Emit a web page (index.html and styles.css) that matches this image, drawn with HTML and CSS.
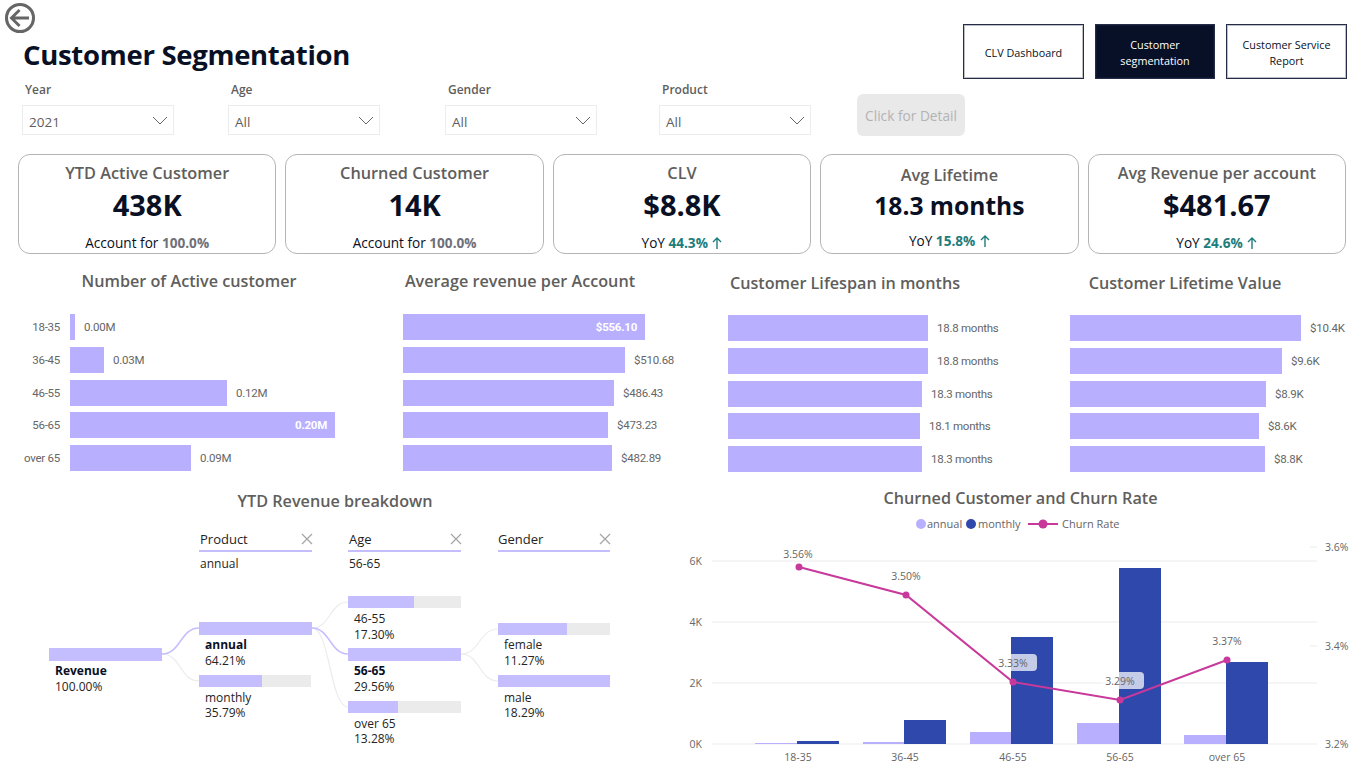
FILE: index.html
```html
<!DOCTYPE html>
<html lang="en">
<head>
    <meta charset="UTF-8">
    <meta name="viewport" content="width=device-width, initial-scale=1.0">
    <title>Customer Segmentation</title>
    <link rel="stylesheet" href="styles.css">
</head>
<body>
    <div class="page">
        <header class="top">
            <div class="top-left">
                <svg class="back" viewBox="0 0 40 40" width="40" height="40">
                    <circle cx="20" cy="20" r="15" fill="none" stroke="#666" stroke-width="3.4"/>
                    <path d="M30 20H10.5M19.5 11L10.5 20L19.5 29" fill="none" stroke="#666" stroke-width="3.2"/>
                </svg>
                <h1>Customer Segmentation</h1>
                <div class="filters">
                    <div class="slicer">
                        <div class="slicer-label">Year</div>
                        <div class="dropdown">2021<svg viewBox="0 0 16 9" width="16" height="9"><path d="M1 1L8 8L15 1" fill="none" stroke="#666"/></svg></div>
                    </div>
                    <div class="slicer">
                        <div class="slicer-label">Age</div>
                        <div class="dropdown">All<svg viewBox="0 0 16 9" width="16" height="9"><path d="M1 1L8 8L15 1" fill="none" stroke="#666"/></svg></div>
                    </div>
                    <div class="slicer">
                        <div class="slicer-label">Gender</div>
                        <div class="dropdown">All<svg viewBox="0 0 16 9" width="16" height="9"><path d="M1 1L8 8L15 1" fill="none" stroke="#666"/></svg></div>
                    </div>
                    <div class="slicer">
                        <div class="slicer-label">Product</div>
                        <div class="dropdown">All<svg viewBox="0 0 16 9" width="16" height="9"><path d="M1 1L8 8L15 1" fill="none" stroke="#666"/></svg></div>
                    </div>
                    <div class="detail-btn">Click for Detail</div>
                </div>
            </div>
            <nav class="nav">
                <a class="nav-btn">CLV Dashboard</a>
                <a class="nav-btn active">Customer segmentation</a>
                <a class="nav-btn">Customer Service Report</a>
            </nav>
        </header>

        <section class="kpis">
            <div class="kpi">
                <div class="kpi-title">YTD Active Customer</div>
                <div class="kpi-value">438K</div>
                <div class="kpi-foot">Account for <b>100.0%</b></div>
            </div>
            <div class="kpi">
                <div class="kpi-title">Churned Customer</div>
                <div class="kpi-value">14K</div>
                <div class="kpi-foot">Account for <b>100.0%</b></div>
            </div>
            <div class="kpi">
                <div class="kpi-title">CLV</div>
                <div class="kpi-value">$8.8K</div>
                <div class="kpi-foot">YoY <b class="up">44.3%</b> <svg class="arrow" viewBox="0 0 10 12" width="10" height="12"><path d="M5 12V1M1 5L5 1L9 5"/></svg></div>
            </div>
            <div class="kpi kpi-alt">
                <div class="kpi-title">Avg Lifetime</div>
                <div class="kpi-value">18.3 months</div>
                <div class="kpi-foot">YoY <b class="up">15.8%</b> <svg class="arrow" viewBox="0 0 10 12" width="10" height="12"><path d="M5 12V1M1 5L5 1L9 5"/></svg></div>
            </div>
            <div class="kpi">
                <div class="kpi-title">Avg Revenue per account</div>
                <div class="kpi-value">$481.67</div>
                <div class="kpi-foot">YoY <b class="up">24.6%</b> <svg class="arrow" viewBox="0 0 10 12" width="10" height="12"><path d="M5 12V1M1 5L5 1L9 5"/></svg></div>
            </div>
        </section>

        <section class="charts">
            <div class="bar-chart active-chart">
                <h2>Number of Active customer</h2>
                <div class="row"><span class="cat">18-35</span><div class="bar" style="width:5px"></div><span class="val">0.00M</span></div>
                <div class="row"><span class="cat">36-45</span><div class="bar" style="width:34px"></div><span class="val">0.03M</span></div>
                <div class="row"><span class="cat">46-55</span><div class="bar" style="width:157px"></div><span class="val">0.12M</span></div>
                <div class="row"><span class="cat">56-65</span><div class="bar" style="width:265px"><span class="val-in">0.20M</span></div></div>
                <div class="row"><span class="cat">over 65</span><div class="bar" style="width:121px"></div><span class="val">0.09M</span></div>
            </div>
            <div class="bar-chart revenue-chart">
                <h2>Average revenue per Account</h2>
                <div class="row"><div class="bar" style="width:242px"><span class="val-in">$556.10</span></div></div>
                <div class="row"><div class="bar" style="width:222px"></div><span class="val">$510.68</span></div>
                <div class="row"><div class="bar" style="width:211px"></div><span class="val">$486.43</span></div>
                <div class="row"><div class="bar" style="width:205px"></div><span class="val">$473.23</span></div>
                <div class="row"><div class="bar" style="width:209px"></div><span class="val">$482.89</span></div>
            </div>
            <div class="bar-chart lifespan-chart">
                <h2>Customer Lifespan in months</h2>
                <div class="row"><div class="bar" style="width:200px"></div><span class="val">18.8 months</span></div>
                <div class="row"><div class="bar" style="width:200px"></div><span class="val">18.8 months</span></div>
                <div class="row"><div class="bar" style="width:194px"></div><span class="val">18.3 months</span></div>
                <div class="row"><div class="bar" style="width:192px"></div><span class="val">18.1 months</span></div>
                <div class="row"><div class="bar" style="width:194px"></div><span class="val">18.3 months</span></div>
            </div>
            <div class="bar-chart value-chart">
                <h2>Customer Lifetime Value</h2>
                <div class="row"><div class="bar" style="width:231px"></div><span class="val">$10.4K</span></div>
                <div class="row"><div class="bar" style="width:212px"></div><span class="val">$9.6K</span></div>
                <div class="row"><div class="bar" style="width:196px"></div><span class="val">$8.9K</span></div>
                <div class="row"><div class="bar" style="width:189px"></div><span class="val">$8.6K</span></div>
                <div class="row"><div class="bar" style="width:195px"></div><span class="val">$8.8K</span></div>
            </div>
        </section>

        <section class="bottom">
            <div class="panel tree-panel">
                <h2>YTD Revenue breakdown</h2>
                <svg class="tree" viewBox="0 513 670 258" width="670" height="258">
                    <text class="tree-head" x="200" y="544">Product</text>
                    <path class="tree-x" d="M302 534L312 544M312 534L302 544"/>
                    <rect class="tree-line" x="199" y="550" width="113" height="2"/>
                    <text class="tree-text" x="200" y="568">annual</text>

                    <text class="tree-head" x="349" y="544">Age</text>
                    <path class="tree-x" d="M451 534L461 544M461 534L451 544"/>
                    <rect class="tree-line" x="348" y="550" width="113" height="2"/>
                    <text class="tree-text" x="349" y="568">56-65</text>

                    <text class="tree-head" x="498" y="544">Gender</text>
                    <path class="tree-x" d="M600 534L610 544M610 534L600 544"/>
                    <rect class="tree-line" x="498" y="550" width="112" height="2"/>

                    <path class="link" d="M162 654C181 654 180 681 199 681"/>
                    <path class="link" d="M312 628C330 628 330 602 348 602"/>
                    <path class="link" d="M312 628C330 628 330 707 348 707"/>
                    <path class="link" d="M461 654C480 654 479 629 498 629"/>
                    <path class="link" d="M461 654C480 654 479 681 498 681"/>
                    <path class="link link-on" d="M162 654C181 654 180 628 199 628"/>
                    <path class="link link-on" d="M312 628C330 628 330 654 348 654"/>

                    <rect class="node" x="49" y="648" width="113" height="13"/>
                    <text class="tree-text bold" x="55" y="675">Revenue</text>
                    <text class="tree-text" x="55" y="691">100.00%</text>

                    <rect class="node" x="199" y="622" width="113" height="13"/>
                    <text class="tree-text bold" x="205" y="649">annual</text>
                    <text class="tree-text" x="205" y="665">64.21%</text>
                    <rect class="node-bg" x="199" y="675" width="112" height="12"/>
                    <rect class="node" x="199" y="675" width="63" height="12"/>
                    <text class="tree-text" x="205" y="702">monthly</text>
                    <text class="tree-text" x="205" y="717">35.79%</text>

                    <rect class="node-bg" x="348" y="596" width="113" height="12"/>
                    <rect class="node" x="348" y="596" width="66" height="12"/>
                    <text class="tree-text" x="354" y="623">46-55</text>
                    <text class="tree-text" x="354" y="639">17.30%</text>
                    <rect class="node" x="348" y="648" width="113" height="13"/>
                    <text class="tree-text bold" x="354" y="675">56-65</text>
                    <text class="tree-text" x="354" y="691">29.56%</text>
                    <rect class="node-bg" x="348" y="701" width="113" height="12"/>
                    <rect class="node" x="348" y="701" width="50" height="12"/>
                    <text class="tree-text" x="354" y="728">over 65</text>
                    <text class="tree-text" x="354" y="743">13.28%</text>

                    <rect class="node-bg" x="498" y="623" width="112" height="12"/>
                    <rect class="node" x="498" y="623" width="69" height="12"/>
                    <text class="tree-text" x="504" y="649">female</text>
                    <text class="tree-text" x="504" y="665">11.27%</text>
                    <rect class="node" x="498" y="675" width="112" height="12"/>
                    <text class="tree-text" x="504" y="702">male</text>
                    <text class="tree-text" x="504" y="717">18.29%</text>
                </svg>
            </div>
            <div class="panel combo-panel">
                <h2>Churned Customer and Churn Rate</h2>
                <svg class="combo" viewBox="670 510 701 261" width="701" height="261">
                    <circle class="annual" cx="921" cy="524" r="5"/>
                    <text class="legend" x="927" y="528">annual</text>
                    <circle class="monthly" cx="971" cy="524" r="5"/>
                    <text class="legend" x="978" y="528">monthly</text>
                    <path class="rate" d="M1028 524H1058"/>
                    <circle class="rate-dot" cx="1043" cy="524" r="4.5"/>
                    <text class="legend" x="1062" y="528">Churn Rate</text>

                    <path class="grid-line" d="M712 561H1317M712 622H1317M712 683H1317M712 744H1317M1310 547H1317M1310 646H1317"/>
                    <text class="axis" x="702" y="565" text-anchor="end">6K</text>
                    <text class="axis" x="702" y="626" text-anchor="end">4K</text>
                    <text class="axis" x="702" y="687" text-anchor="end">2K</text>
                    <text class="axis" x="702" y="748" text-anchor="end">0K</text>
                    <text class="axis" x="1325" y="551">3.6%</text>
                    <text class="axis" x="1325" y="650">3.4%</text>
                    <text class="axis" x="1325" y="748">3.2%</text>

                    <rect class="annual" x="755" y="743" width="42" height="1"/>
                    <rect class="monthly" x="797" y="741" width="42" height="3"/>
                    <rect class="annual" x="863" y="742" width="42" height="2"/>
                    <rect class="monthly" x="904" y="720" width="42" height="24"/>
                    <rect class="annual" x="970" y="732" width="42" height="12"/>
                    <rect class="monthly" x="1011" y="637" width="42" height="107"/>
                    <rect class="annual" x="1077" y="723" width="42" height="21"/>
                    <rect class="monthly" x="1119" y="568" width="42" height="176"/>
                    <rect class="annual" x="1184" y="735" width="42" height="9"/>
                    <rect class="monthly" x="1226" y="662" width="42" height="82"/>

                    <text class="axis" x="798" y="761" text-anchor="middle">18-35</text>
                    <text class="axis" x="905" y="761" text-anchor="middle">36-45</text>
                    <text class="axis" x="1013" y="761" text-anchor="middle">46-55</text>
                    <text class="axis" x="1120" y="761" text-anchor="middle">56-65</text>
                    <text class="axis" x="1227" y="761" text-anchor="middle">over 65</text>

                    <rect class="chip" x="996" y="654" width="41" height="17" rx="4"/>
                    <rect class="chip" x="1103" y="672" width="41" height="17" rx="4"/>
                    <path class="rate" d="M799 567L906 595L1013 682L1120 700L1227 660"/>
                    <circle class="rate-dot" cx="799" cy="567" r="3.5"/>
                    <circle class="rate-dot" cx="906" cy="595" r="3.5"/>
                    <circle class="rate-dot" cx="1013" cy="682" r="3.5"/>
                    <circle class="rate-dot" cx="1120" cy="700" r="3.5"/>
                    <circle class="rate-dot" cx="1227" cy="660" r="3.5"/>
                    <text class="point" x="798" y="558" text-anchor="middle">3.56%</text>
                    <text class="point" x="906" y="580" text-anchor="middle">3.50%</text>
                    <text class="point" x="1013" y="667" text-anchor="middle">3.33%</text>
                    <text class="point" x="1120" y="685" text-anchor="middle">3.29%</text>
                    <text class="point" x="1227" y="645" text-anchor="middle">3.37%</text>
                </svg>
            </div>
        </section>
    </div>
</body>
</html>
```
FILE: styles.css
```css
* {
    margin: 0;
    padding: 0;
    box-sizing: border-box;
}

body {
    background: #fff;
    font-family: "Open Sans", "Noto Sans", sans-serif;
    color: #091024;
}

.page {
    width: 1371px;
    height: 771px;
    overflow: hidden;
}

/* header */
.top {
    display: grid;
    grid-template-columns: minmax(0, 1fr) 408px;
    height: 154px;
}

.back {
    display: block;
    height: 36px;
}

.top h1 {
    font-size: 27.5px;
    line-height: 36px;
    font-weight: 700;
    letter-spacing: -0.3px;
    margin: 1px 0 9px 23px;
    color: #091024;
}

.filters {
    display: grid;
    grid-template-columns: 206px 217px 214px 198px 108px;
    padding-left: 22px;
    align-items: start;
}

.slicer-label {
    font-size: 12px;
    font-weight: 600;
    line-height: 16px;
    color: #605e5c;
    padding-left: 3px;
    margin-bottom: 7px;
}

.dropdown {
    display: flex;
    align-items: center;
    justify-content: space-between;
    width: 151.5px;
    height: 30px;
    border: 1px solid #ececec;
    padding: 3px 5px 0 6px;
    font-size: 13.5px;
    color: #605e5c;
}

.dropdown svg {
    margin-top: -3px;
}

.detail-btn {
    width: 108px;
    height: 42px;
    margin-top: 12px;
    border-radius: 6px;
    background: #e9e9e9;
    color: #b3b3b3;
    font-size: 13.7px;
    line-height: 44px;
    text-align: center;
}

.nav {
    display: flex;
    gap: 11px;
    padding: 24px 24px 0 0;
}

.nav-btn {
    display: flex;
    align-items: center;
    justify-content: center;
    width: 121px;
    height: 55px;
    border: 1px solid #252c47;
    box-shadow: inset 0 0 0 1px rgba(37, 44, 71, 0.3);
    font-size: 10.8px;
    line-height: 16px;
    text-align: center;
    padding: 2px 10px 0;
    color: #091024;
}

.nav-btn.active {
    width: 120px;
    background: #071027;
    color: #fff;
}

/* kpi cards */
.kpis {
    display: grid;
    grid-template-columns: repeat(5, 1fr);
    gap: 9px;
    width: 1328px;
    height: 100px;
    margin-left: 18px;
}

.kpi {
    height: 100px;
    border: 1px solid #b5b5b5;
    border-radius: 12px;
    padding-top: 8px;
    text-align: center;
}

.kpi-title {
    font-size: 16.3px;
    font-weight: 600;
    line-height: 20px;
    color: #605e5c;
}

.kpi-value {
    font-size: 29px;
    font-weight: 700;
    line-height: 40px;
    margin-top: 2px;
}

.kpi-foot {
    font-size: 13.6px;
    line-height: 20px;
    margin-top: 8px;
}

.kpi-foot b {
    color: #6f7079;
}

.kpi-foot b.up {
    color: #1c7d7b;
}

.arrow {
    margin-left: 1px;
    vertical-align: -1px;
    fill: none;
    stroke: #1c7d7b;
    stroke-width: 1.4;
}

.kpi-alt .kpi-title {
    margin-top: 2px;
    margin-bottom: -1px;
}

.kpi-alt .kpi-value {
    font-size: 24.6px;
}

.kpi-alt .kpi-foot {
    margin-top: 5px;
}

/* bar charts */
.charts {
    display: grid;
    grid-template-columns: 342px 330px 350px 331px;
    height: 226px;
    margin-left: 18px;
}

.bar-chart h2 {
    font-size: 16.2px;
    font-weight: 600;
    line-height: 24px;
    color: #605e5c;
    text-align: center;
    margin-bottom: 21px;
}

.active-chart,
.revenue-chart {
    padding-top: 15px;
}

.lifespan-chart,
.value-chart {
    padding-top: 17px;
}

.lifespan-chart h2,
.value-chart h2 {
    margin-bottom: 20px;
}

.revenue-chart {
    width: 320px;
    padding-left: 43px;
}

.revenue-chart h2 {
    margin-left: -43px;
}

.lifespan-chart {
    width: 310px;
    padding-left: 38px;
}

.lifespan-chart h2 {
    margin-left: -38px;
}

.value-chart {
    width: 290px;
    padding-left: 30px;
}

.value-chart h2 {
    margin-left: -30px;
}

.row {
    display: flex;
    align-items: center;
    height: 26px;
    margin-bottom: 6.8px;
    font-family: Roboto, sans-serif;
    font-size: 11.5px;
    letter-spacing: -0.25px;
    white-space: nowrap;
    color: #666;
}

.cat {
    width: 42px;
    margin-right: 10px;
    text-align: right;
}

.bar {
    display: flex;
    flex: none;
    align-items: center;
    justify-content: flex-end;
    height: 26px;
    background: #b8b0ff;
}

.val {
    margin-left: 9px;
}

.val-in {
    padding-right: 8px;
    color: #fff;
    font-weight: 700;
}

/* bottom row */
.bottom {
    display: flex;
    height: 291px;
}

.panel h2 {
    font-size: 16.2px;
    font-weight: 600;
    line-height: 24px;
    color: #605e5c;
    text-align: center;
}

.tree-panel {
    width: 670px;
    padding-top: 9px;
}

.combo-panel {
    width: 701px;
    padding-top: 6px;
}

.tree,
.combo {
    display: block;
}

.tree-head {
    font-size: 13px;
    font-weight: 500;
    fill: #252423;
}

.tree-text {
    font-size: 12px;
    fill: #252423;
}

.tree-text.bold {
    font-weight: 700;
    fill: #091024;
}

.tree-x {
    stroke: #a6a6a6;
    stroke-width: 1.3;
    fill: none;
}

.tree-line {
    fill: #c4beff;
}

.node {
    fill: #c4beff;
}

.node-bg {
    fill: #ebebeb;
}

.link {
    fill: none;
    stroke: #ececec;
    stroke-width: 1.2;
}

.link-on {
    stroke: #c4beff;
    stroke-width: 1.5;
}

.annual {
    fill: #b8b0ff;
}

.monthly {
    fill: #2f48ab;
}

.rate {
    fill: none;
    stroke: #c8399b;
    stroke-width: 2;
}

.rate-dot {
    fill: #c8399b;
}

.legend {
    font-size: 11px;
    fill: #666;
}

.grid-line {
    fill: none;
    stroke: #ebebeb;
}

.axis,
.point {
    font-family: "Open Sans", sans-serif;
    font-size: 10.5px;
    fill: #666;
}

.chip {
    fill: #fff;
    fill-opacity: 0.72;
}
```
